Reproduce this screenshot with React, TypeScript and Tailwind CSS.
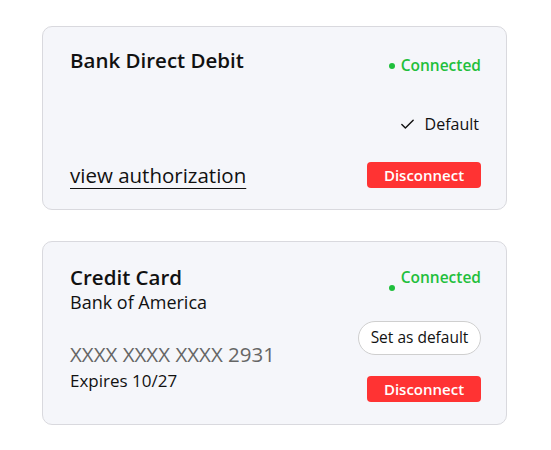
import { Check } from 'lucide-react';

const font = { fontFamily: '"Open Sans", "DejaVu Sans", sans-serif' };

function Status({ dotClass }: { dotClass: string }) {
  return (
    <div className="flex items-start text-[15.5px] leading-[20px] font-semibold text-[#1fbf3c]">
      <span className={`w-[6px] h-[6px] rounded-full bg-[#1fbf3c] mr-[6px] ${dotClass}`} />
      Connected
    </div>
  );
}

function DisconnectButton() {
  return (
    <button className="w-[114px] h-[26px] rounded-[4px] bg-[#ff3333] text-white text-[15px] font-semibold leading-none">
      Disconnect
    </button>
  );
}

export default function App() {
  return (
    <div className="w-[551px] h-[450px] bg-white pt-[26px] pl-[42px] text-[#111]" style={font}>
      <div className="w-[465px] h-[184px] rounded-[10px] border border-[#d9d9de] bg-[#f5f6fa] pt-[20px] pl-[27px] pr-[25px]">
        <div className="flex justify-between items-start">
          <h2 className="text-[20.5px] leading-[26px] font-semibold">Bank Direct Debit</h2>
          <div className="mt-[8px]">
            <Status dotClass="mt-[8px]" />
          </div>
        </div>
        <div className="flex justify-end items-center mt-[39px] text-[16px] leading-[20px] pr-[2px]">
          <Check size={17} strokeWidth={2} className="mr-[9px]" />
          Default
        </div>
        <div className="flex justify-between items-center mt-[28px]">
          <a className="text-[20.5px] leading-[26px] underline underline-offset-[5px] decoration-1">view authorization</a>
          <DisconnectButton />
        </div>
      </div>

      <div className="w-[465px] h-[184px] mt-[31px] rounded-[10px] border border-[#d9d9de] bg-[#f5f6fa] pt-[22px] pl-[27px] pr-[25px] flex justify-between">
        <div>
          <h2 className="text-[20.5px] leading-[26px] font-semibold">Credit Card</h2>
          <p className="text-[18px] leading-[24px]">Bank of America</p>
          <p className="text-[20.5px] leading-[26px] text-[#666] mt-[27px]">XXXX XXXX XXXX 2931</p>
          <p className="text-[17px] leading-[24px] mt-[2px]">Expires 10/27</p>
        </div>
        <div className="flex flex-col items-end">
          <div className="mt-[3px]">
            <Status dotClass="mt-[18px]" />
          </div>
          <button className="mt-[30px] h-[34px] w-[123px] rounded-full border border-[#cfcfcf] bg-white text-[15.5px] leading-none">
            Set as default
          </button>
          <div className="mt-[21px]">
            <DisconnectButton />
          </div>
        </div>
      </div>
    </div>
  );
}
